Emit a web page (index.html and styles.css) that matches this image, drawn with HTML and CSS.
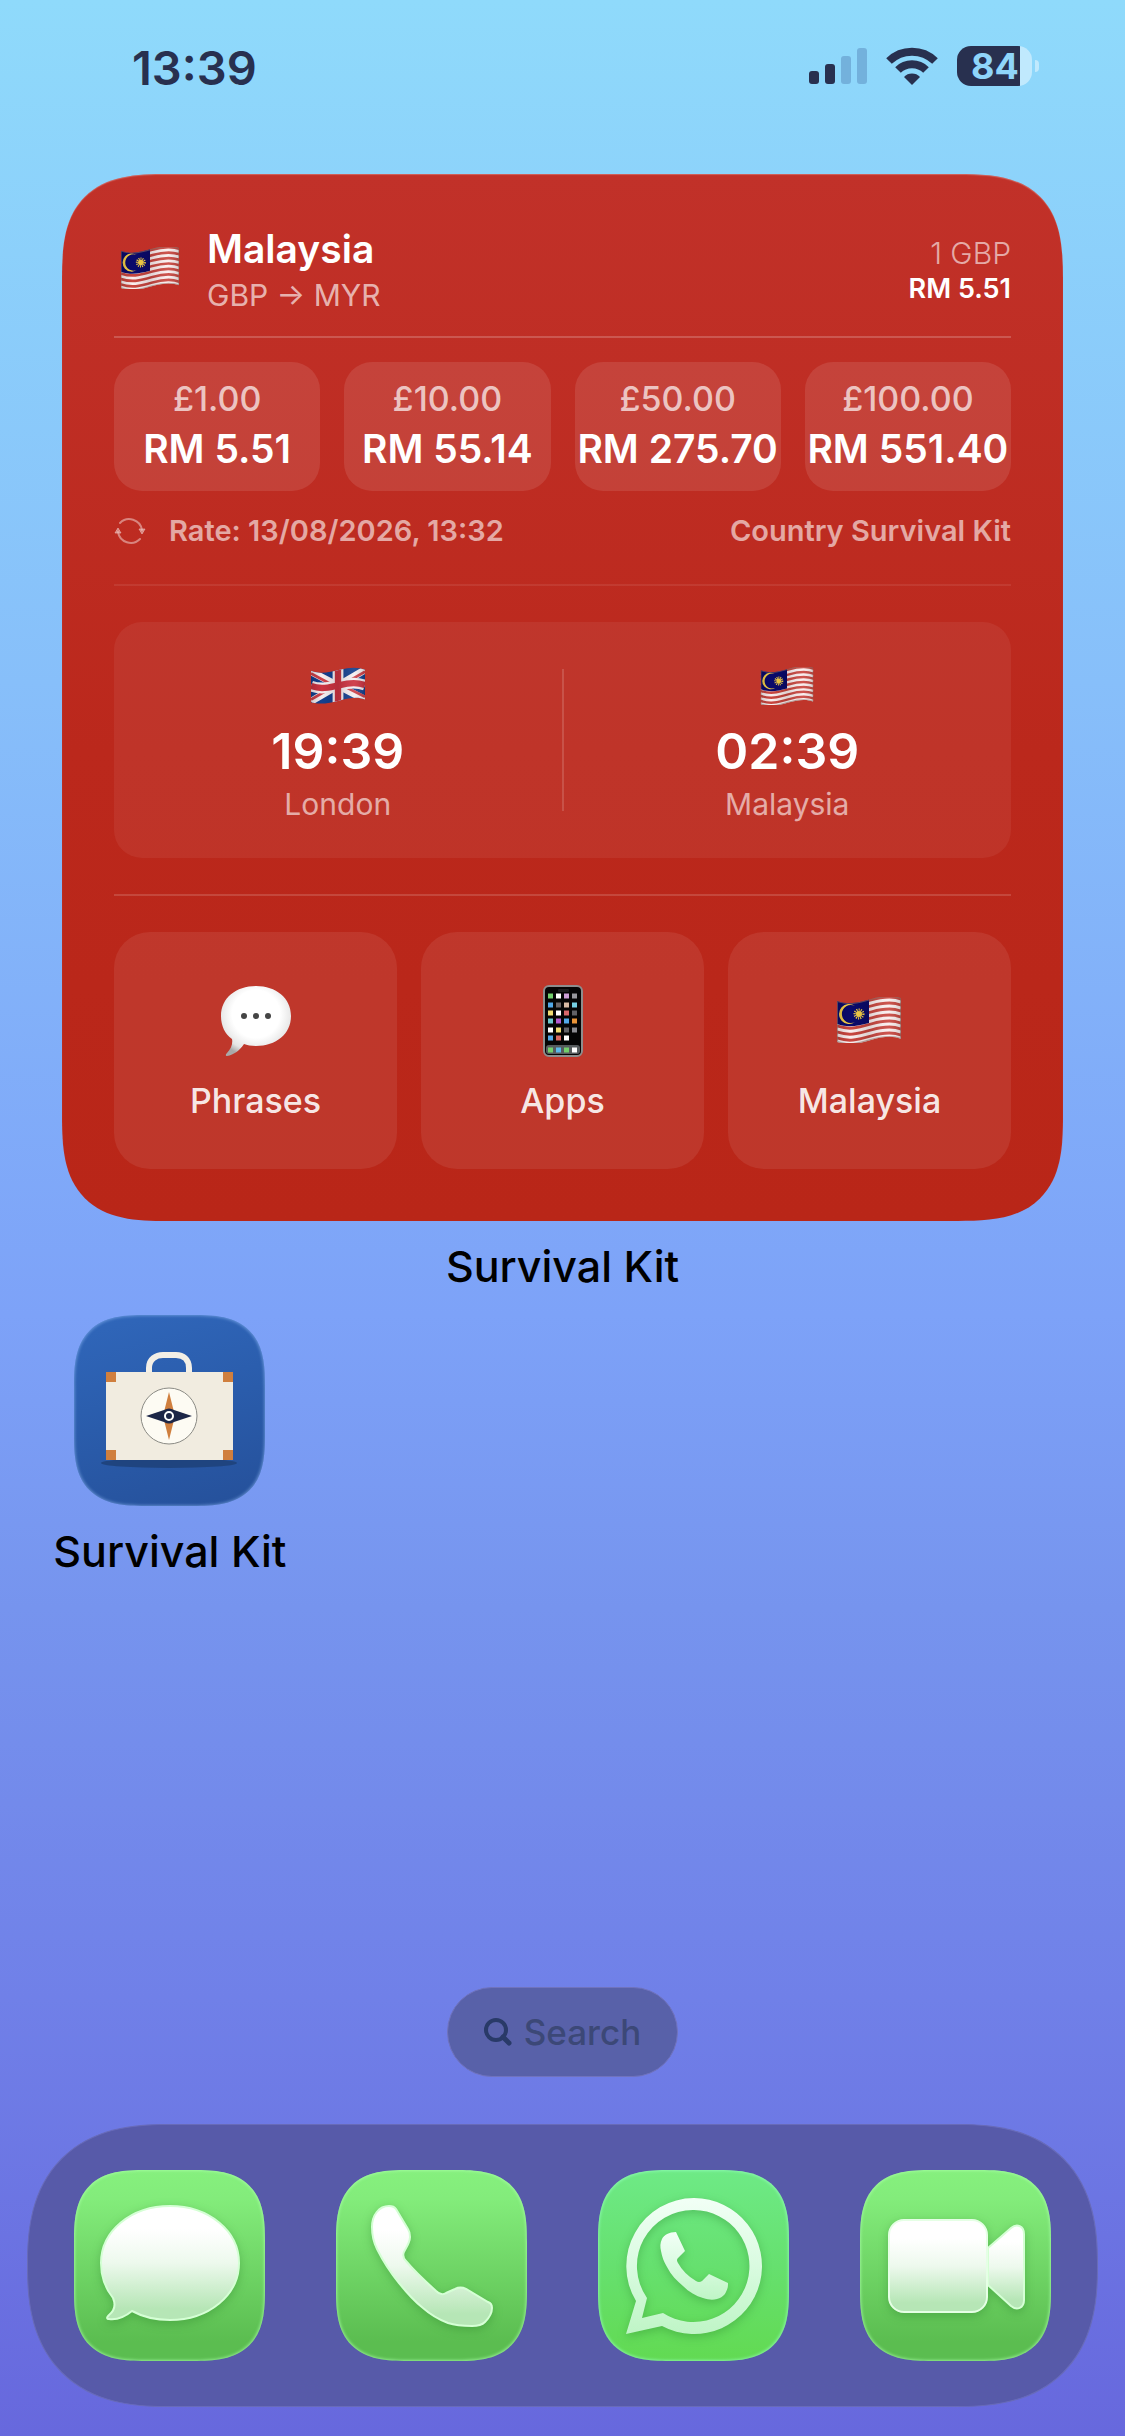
FILE: index.html
```
<!DOCTYPE html>
<html lang="en">
<head>
    <meta charset="utf-8">
    <meta name="viewport" content="width=device-width, initial-scale=1">
    <title>Survival Kit</title>
    <link rel="stylesheet" href="styles.css">
</head>
<body>
    <!-- shared flag drawings and gradients -->
    <svg class="defs" width="0" height="0" aria-hidden="true">
        <defs>
            <linearGradient id="glass" x1="0" y1="0" x2="0" y2="1">
                <stop offset="0.2" stop-color="#fff"/>
                <stop offset="0.5" stop-color="#edf9ed"/>
                <stop offset="0.9" stop-color="#b6e6b6"/>
            </linearGradient>
            <linearGradient id="glass2" x1="0" y1="0" x2="0" y2="1">
                <stop offset="0" stop-color="#f2fff6"/>
                <stop offset="0.5" stop-color="#d9fbe0"/>
                <stop offset="1" stop-color="#bff5c6"/>
            </linearGradient>
            <linearGradient id="fold" x1="0" y1="0" x2="1" y2="0">
                <stop offset="0" stop-color="#000" stop-opacity="0.15"/>
                <stop offset="0.2" stop-color="#000" stop-opacity="0"/>
                <stop offset="0.5" stop-color="#000" stop-opacity="0.12"/>
                <stop offset="0.8" stop-color="#fff" stop-opacity="0.08"/>
                <stop offset="1" stop-color="#000" stop-opacity="0.15"/>
            </linearGradient>
            <radialGradient id="puff" cx="0.5" cy="0.4" r="0.62">
                <stop offset="0.55" stop-color="#fff"/>
                <stop offset="0.85" stop-color="#e4e4e4"/>
                <stop offset="1" stop-color="#a9a9a9"/>
            </radialGradient>
            <path id="wave" d="M0 0c12 4 20 2 34-2s22-4 30-1"/>
            <clipPath id="my-shape"><path d="M0 4c12 4 20 2 34-2s22-4 30-1v41c-8-3-16-3-30 1s-22 6-34 2z"/></clipPath>
            <symbol id="flag-my" viewBox="0 0 64 46">
                <g clip-path="url(#my-shape)">
                    <rect width="64" height="46" fill="#c9463f"/>
                    <g fill="none" stroke="#fbeeee" stroke-width="3">
                        <use href="#wave" y="8"/>
                        <use href="#wave" y="14"/>
                        <use href="#wave" y="20"/>
                        <use href="#wave" y="26"/>
                        <use href="#wave" y="32"/>
                        <use href="#wave" y="38"/>
                        <use href="#wave" y="44"/>
                    </g>
                    <path d="M0 3c12 4 20 2 32-1v24c-12 3-20 5-32 1z" fill="#0a0a6b"/>
                    <path d="M18 9a9 9 0 1 0 0 16a10 10 0 1 1 0-16z" fill="#f5cf47"/>
                    <circle cx="22" cy="17" r="3" fill="#f5cf47"/>
                    <circle cx="22" cy="17" r="4" fill="none" stroke="#f5cf47" stroke-width="3" stroke-dasharray="1 1"/>
                    <rect width="64" height="46" fill="url(#fold)"/>
                    <path d="M0 4c12 4 20 2 34-2s22-4 30-1v41c-8-3-16-3-30 1s-22 6-34 2z" fill="none" stroke="#8b6a63" stroke-opacity="0.6" stroke-width="2"/>
                </g>
            </symbol>
            <clipPath id="uk-shape"><path d="M0 4c10 4 20 2 32-1s20-3 28 0v33c-8-3-16-2-28 1s-22 5-32 2z"/></clipPath>
            <symbol id="flag-uk" viewBox="0 0 60 42">
                <g clip-path="url(#uk-shape)">
                    <rect width="60" height="42" fill="#14408f"/>
                    <path d="M0 5l60 31M0 38L60 3" stroke="#f6eef0" stroke-width="8"/>
                    <path d="M0 7l26 14M60 33L34 20M0 36l26-15M60 5L34 20" stroke="#cc4049" stroke-width="3"/>
                    <path d="M30 0v42" stroke="#f6eef0" stroke-width="12"/>
                    <path d="M0 21c10 4 20 2 32-1s20-3 28 0" fill="none" stroke="#f6eef0" stroke-width="12"/>
                    <path d="M30 0v42" stroke="#cc3340" stroke-width="7"/>
                    <path d="M0 21c10 4 20 2 32-1s20-3 28 0" fill="none" stroke="#cc3340" stroke-width="7"/>
                    <rect width="60" height="42" fill="url(#fold)"/>
                </g>
            </symbol>
        </defs>
    </svg>

    <header class="status-bar">
        <time class="status-time">13:39</time>
        <div class="status-icons">
            <svg class="signal" viewBox="0 0 58 38" role="img" aria-label="Signal">
                <g fill="#28304f">
                    <rect x="0" y="24" width="10" height="13" rx="3"/>
                    <rect x="16" y="17" width="10" height="20" rx="3"/>
                </g>
                <g fill="#73b1dc">
                    <rect x="32" y="9" width="10" height="28" rx="3"/>
                    <rect x="48" y="1" width="10" height="36" rx="3"/>
                </g>
            </svg>
            <svg class="wifi" viewBox="0 0 52 38" role="img" aria-label="Wi-Fi">
                <g fill="none" stroke="#28304f" stroke-width="8">
                    <path d="M3 14a33 33 0 0 1 46 0"/>
                    <path d="M12 23a20 20 0 0 1 28 0"/>
                </g>
                <path d="M26 38l-8-8a11 11 0 0 1 16 0z" fill="#28304f"/>
            </svg>
            <span class="battery"><span class="battery-level">84</span></span>
        </div>
    </header>

    <main class="home">
        <section class="widget">
            <div class="widget-head">
                <svg class="head-flag" aria-hidden="true"><use href="#flag-my"/></svg>
                <div>
                    <h1 class="country">Malaysia</h1>
                    <p class="pair">GBP → MYR</p>
                </div>
                <div class="unit-rate">
                    <p class="unit">1 GBP</p>
                    <p class="unit-value">RM 5.51</p>
                </div>
            </div>

            <ul class="amounts">
                <li class="amount"><span class="from">£1.00</span><span class="to">RM 5.51</span></li>
                <li class="amount"><span class="from">£10.00</span><span class="to">RM 55.14</span></li>
                <li class="amount"><span class="from">£50.00</span><span class="to">RM 275.70</span></li>
                <li class="amount"><span class="from">£100.00</span><span class="to">RM 551.40</span></li>
            </ul>

            <div class="rate-row">
                <svg class="refresh" viewBox="0 0 32 28" aria-hidden="true">
                    <g fill="none" stroke="currentColor" stroke-width="2" stroke-linecap="round">
                        <path d="M6 6a13 13 0 0 1 22 7"/>
                        <path d="M26 22a13 13 0 0 1-22-7"/>
                    </g>
                    <path d="M25 12h6l-3 5zM1 16h6l-3-5z" fill="currentColor" stroke="currentColor" stroke-linejoin="round"/>
                </svg>
                <span>Rate: 13/08/2026, 13:32</span>
                <span class="kit-name">Country Survival Kit</span>
            </div>

            <div class="clocks">
                <div class="clock">
                    <svg class="clock-flag" aria-hidden="true"><use href="#flag-uk"/></svg>
                    <time class="clock-time">19:39</time>
                    <span class="clock-place">London</span>
                </div>
                <span class="clock-line"></span>
                <div class="clock">
                    <svg class="clock-flag" aria-hidden="true"><use href="#flag-my"/></svg>
                    <time class="clock-time">02:39</time>
                    <span class="clock-place">Malaysia</span>
                </div>
            </div>

            <nav class="tiles">
                <a class="tile" href="#phrases">
                    <svg class="tile-icon" viewBox="0 0 72 72" aria-hidden="true">
                        <path d="M36 1C56 1 71 13 71 31S56 61 36 61c-5 0-9-1-12-2-4 6-10 11-17 12-2 0-1-2 0-3 4-4 6-9 5-14C5 49 1 41 1 31 1 13 16 1 36 1z" fill="url(#puff)"/>
                        <g fill="#454545"><circle cx="24" cy="31" r="3"/><circle cx="36" cy="31" r="3"/><circle cx="48" cy="31" r="3"/></g>
                    </svg>
                    <span>Phrases</span>
                </a>
                <a class="tile" href="#apps">
                    <svg class="tile-icon" viewBox="0 0 72 72" aria-hidden="true">
                        <rect x="17" y="1" width="38" height="70" rx="5" fill="#050505" stroke="#8d8d8d" stroke-width="2"/>
                        <rect x="31" y="4" width="11" height="3" rx="1" fill="#1d1d1f"/>
                        <rect x="19" y="60" width="34" height="9" rx="3" fill="#565b5d"/>
                        <!-- app icons on the phone, row by row -->
                        <g stroke-width="5">
                            <path d="M21 11h5" stroke="#72cf6b"/><path d="M29 11h5" stroke="#fff"/><path d="M37 11h5" stroke="#cf9fd8"/><path d="M45 11h5" stroke="#98989d"/>
                            <path d="M21 20h5" stroke="#52a8e8"/><path d="M29 20h5" stroke="#6b6567"/><path d="M37 20h5" stroke="#d9bba5"/><path d="M45 20h5" stroke="#74cfe2"/>
                            <path d="M21 28h5" stroke="#f0dc72"/><path d="M29 28h5" stroke="#fff"/><path d="M37 28h5" stroke="#d9676b"/><path d="M45 28h5" stroke="#626266"/>
                            <path d="M21 36h5" stroke="#6cc9ce"/><path d="M29 36h5" stroke="#b45bd0"/><path d="M37 36h5" stroke="#52a8e8"/><path d="M45 36h5" stroke="#ea9438"/>
                            <path d="M21 45h5" stroke="#fff"/><path d="M29 45h5" stroke="#f0dc72"/><path d="M37 45h5" stroke="#626266"/><path d="M45 45h5" stroke="#8b8b90"/>
                            <path d="M21 53h5" stroke="#52a8e8"/><path d="M29 53h5" stroke="#d9675f"/><path d="M37 53h5" stroke="#fff"/>
                            <path d="M21 65h5" stroke="#72cf6b"/><path d="M29 65h5" stroke="#5ab8ea"/><path d="M37 65h5" stroke="#72cf6b"/><path d="M45 65h5" stroke="#fff"/>
                        </g>
                    </svg>
                    <span>Apps</span>
                </a>
                <a class="tile" href="#malaysia">
                    <svg class="tile-icon" viewBox="0 0 72 72" aria-hidden="true"><use href="#flag-my" x="3" y="12" width="64" height="46"/></svg>
                    <span>Malaysia</span>
                </a>
            </nav>
        </section>
        <p class="widget-label">Survival Kit</p>

        <div class="apps">
            <a class="app" href="#survival-kit">
                <span class="icon icon-kit">
                    <svg viewBox="0 0 190 190" aria-hidden="true">
                        <ellipse cx="95" cy="148" rx="68" ry="5" fill="#1f447f"/>
                        <path d="M75 60V53C75 44 82 40 89 40H102C109 40 115 44 115 53V60" fill="none" stroke="#f3efe6" stroke-width="6"/>
                        <rect x="32" y="57" width="127" height="88" fill="#f1ece0"/>
                        <path d="M32 57h10v10H32zM149 57h10v10h-10zM32 135h10v10H32zM149 135h10v10h-10z" fill="#d07f3e"/>
                        <circle cx="95" cy="101" r="28" fill="#fdfbf3" stroke="#8b8b85"/>
                        <path d="M95 77l6 24-6 24-6-24z" fill="#d07f3e"/>
                        <path d="M72 101L90 95Q95 92 100 95L118 101L100 107Q95 110 90 107z" fill="#1c2647"/>
                        <circle cx="95" cy="101" r="4" fill="none" stroke="#fff" stroke-width="2"/>
                    </svg>
                </span>
                <span class="app-name">Survival Kit</span>
            </a>
        </div>
    </main>

    <button class="search" type="button">
        <svg viewBox="0 0 28 28" aria-hidden="true">
            <circle cx="12" cy="12" r="10" fill="none" stroke="#293a68" stroke-width="4"/>
            <path d="M19 19l6 6" stroke="#293a68" stroke-width="5" stroke-linecap="round"/>
        </svg>
        Search
    </button>

    <nav class="dock">
        <a class="icon icon-green" href="#messages" aria-label="Messages">
            <svg viewBox="0 0 190 190" aria-hidden="true">
                <path d="M96 36C135 36 165 61 165 93S135 150 96 150C82 150 69 147 58 141C52 146 43 150 35 149C32 149 33 147 35 145C40 141 42 135 39 128C31 118 27 107 27 93C27 61 57 36 96 36Z" fill="url(#glass)" stroke="#d5ffd5" stroke-width="2"/>
            </svg>
        </a>
        <a class="icon icon-green" href="#phone" aria-label="Phone">
            <svg viewBox="0 0 190 190" aria-hidden="true">
                <path d="M53 36C43 36 36 45 36 57C36 66 38 73 41 79C47 91 54 102 63 113C71 123 78 131 87 138C96 146 104 150 112 153C121 156 128 156 136 156C142 156 146 155 149 152C153 148 156 143 156 138C156 135 155 133 152 132L130 119C126 117 123 117 119 119L110 123C107 125 103 124 100 121C89 111 79 102 70 91C66 87 67 83 69 80C72 75 74 71 74 67C74 64 74 62 72 59L60 39C58 36 56 36 53 36Z" fill="url(#glass)" stroke="#d5ffd5" stroke-width="2"/>
            </svg>
        </a>
        <a class="icon icon-whatsapp" href="#whatsapp" aria-label="WhatsApp">
            <svg viewBox="0 0 190 190" aria-hidden="true">
                <path fill-rule="evenodd" d="M96 28A68 68 0 1 1 64 156L28 164L38 131A68 68 0 0 1 96 28ZM96 40A56 56 0 0 0 49 128L44 148L65 143A56 56 0 1 0 96 40Z" fill="url(#glass2)"/>
                <path d="M78 62C71 62 66 65 64 69C62 73 62 77 63 81C64 87 66 92 69 97C73 105 79 111 85 116C91 122 98 126 105 128C111 130 115 130 119 129C123 128 127 125 128 122C130 118 130 116 130 113L111 104L104 111Q101 113 98 111Q86 104 80 93Q78 90 80 88L87 81Z" fill="url(#glass2)"/>
            </svg>
        </a>
        <a class="icon icon-green" href="#facetime" aria-label="FaceTime">
            <svg viewBox="0 0 190 190" aria-hidden="true">
                <path d="M128 78L151 58C157 53 164 56 164 64V130C164 138 157 141 151 136L128 115Z" fill="url(#glass)" stroke="#d5ffd5" stroke-width="2"/>
                <rect x="29" y="50" width="98" height="92" rx="15" fill="url(#glass)" stroke="#e5ffe5" stroke-width="2"/>
            </svg>
        </a>
    </nav>
</body>
</html>
```
FILE: styles.css
```
* {
    box-sizing: border-box;
    margin: 0;
    padding: 0;
}
body {
    min-height: 100vh;
    display: flex;
    flex-direction: column;
    padding-bottom: 29px;
    background: linear-gradient(#8fdafb, #87bffa 28%, #7da2f8 54%, #7694ee 66%, #7080e8 82%, #6768dd);
    font-family: Inter, "Liberation Sans", sans-serif;
    color: #fff;
}
a {
    color: inherit;
    text-decoration: none;
}
ul {
    list-style: none;
}
.defs {
    position: absolute;
}

/* status bar */
.status-bar {
    display: flex;
    justify-content: space-between;
    padding: 38px 93px 76px 132px;
    color: #28304f;
}
.status-time {
    font-size: 47px;
    line-height: 60px;
    font-weight: 600;
}
.status-icons {
    display: flex;
    align-items: center;
    gap: 19px;
    height: 56px;
}
.signal {
    width: 58px;
    height: 38px;
}
.wifi {
    width: 52px;
    height: 38px;
}
.battery {
    position: relative;
    width: 75px;
    height: 40px;
    border-radius: 14px;
    background: linear-gradient(90deg, #28304f 63px, #c0e9fd 63px);
    color: #8fd5fa;
}
/* battery tip */
.battery::after {
    content: "";
    position: absolute;
    right: -7px;
    top: 14px;
    width: 4px;
    height: 12px;
    border-radius: 0 6px 6px 0;
    background: #c0e9fd;
}
.battery-level {
    display: block;
    padding-left: 14px;
    font-size: 36px;
    line-height: 40px;
    font-weight: 700;
}

/* widget */
.home {
    padding: 0 39px;
}
.widget {
    margin: 0 23px;
    padding: 51px 52px 52px;
    border-radius: 84px;
    background: linear-gradient(#c13129, #bb281c 55%, #b92618);
    box-shadow: inset 0 1px 1px rgba(255, 255, 255, 0.25);
}
.widget-head {
    display: flex;
    align-items: center;
    padding-bottom: 19px;
    border-bottom: 2px solid rgba(255, 255, 255, 0.2);
}
.head-flag {
    width: 60px;
    height: 42px;
    margin: 0 27px 6px 6px;
}
.country {
    font-size: 39px;
    line-height: 48px;
    font-weight: 600;
}
.pair {
    font-size: 30px;
    line-height: 44px;
    color: rgba(255, 255, 255, 0.65);
}
.unit-rate {
    margin-left: auto;
    text-align: right;
    line-height: 35px;
}
.unit {
    font-size: 30px;
    font-weight: 300;
    color: rgba(255, 255, 255, 0.6);
}
.unit-value {
    font-size: 27px;
    font-weight: 600;
}
.amounts {
    display: grid;
    grid-template-columns: repeat(4, 1fr);
    gap: 24px;
    margin-top: 24px;
}
.amount {
    display: flex;
    flex-direction: column;
    align-items: center;
    min-width: 0;
    padding: 12px 0 17px;
    border-radius: 28px;
    background: rgba(255, 255, 255, 0.1);
    line-height: 50px;
    white-space: nowrap;
}
.from {
    font-size: 34px;
    font-weight: 500;
    color: rgba(255, 255, 255, 0.7);
}
.to {
    font-size: 39px;
    font-weight: 600;
}
.rate-row {
    display: flex;
    align-items: center;
    padding: 20px 0 33px;
    border-bottom: 2px solid rgba(255, 255, 255, 0.08);
    font-size: 29px;
    line-height: 40px;
    font-weight: 600;
    color: rgba(255, 255, 255, 0.6);
}
.refresh {
    width: 32px;
    height: 28px;
    margin-right: 23px;
    opacity: 0.7;
}
.kit-name {
    margin-left: auto;
}
.clocks {
    display: flex;
    align-items: center;
    margin: 36px 0;
    border-radius: 28px;
    background: rgba(255, 255, 255, 0.06);
}
.clock {
    flex: 1;
    display: flex;
    flex-direction: column;
    align-items: center;
    padding: 45px 0 31px;
}
.clock-line {
    width: 2px;
    height: 142px;
    background: rgba(255, 255, 255, 0.15);
}
.clock-flag {
    width: 54px;
    height: 38px;
    margin-bottom: 16px;
}
.clock-time {
    font-size: 50px;
    line-height: 60px;
    font-weight: 600;
}
.clock-place {
    font-size: 30px;
    line-height: 46px;
    color: rgba(255, 255, 255, 0.6);
}
.tiles {
    display: grid;
    grid-template-columns: repeat(3, 1fr);
    gap: 24px;
    padding-top: 36px;
    border-top: 2px solid rgba(255, 255, 255, 0.15);
}
.tile {
    display: flex;
    flex-direction: column;
    align-items: center;
    gap: 20px;
    padding: 53px 0 44px;
    border-radius: 36px;
    background: rgba(255, 255, 255, 0.08);
    font-size: 34px;
    line-height: 48px;
    font-weight: 500;
    color: rgba(255, 255, 255, 0.9);
}
.tile-icon {
    width: 72px;
    height: 72px;
}
.widget-label,
.app-name {
    padding-top: 15px;
    font-size: 43px;
    line-height: 60px;
    font-weight: 500;
    text-align: center;
    color: #000;
}

/* home screen apps */
.apps {
    display: grid;
    grid-template-columns: repeat(4, 1fr);
    margin-top: 19px;
}
.app {
    display: flex;
    flex-direction: column;
    align-items: center;
    white-space: nowrap;
}
.icon {
    display: block;
    width: 191px;
    height: 191px;
    border-radius: 52px;
}
.icon svg {
    display: block;
    width: 190px;
    height: 190px;
}
.icon-kit {
    background: linear-gradient(165deg, #3067bb, #2a5cab 50%, #25509a);
    box-shadow: inset 0 0 3px 1px rgba(160, 200, 255, 0.45);
}
.icon-green {
    background: linear-gradient(#86f07e, #83ec7b 15%, #5bbd50 90%);
    box-shadow: inset 0 0 3px 1px rgba(170, 255, 170, 0.7);
}
.icon-whatsapp {
    background: linear-gradient(#6eea86, #66e06f 50%, #62da52);
    box-shadow: inset 0 0 3px 1px rgba(150, 255, 190, 0.7);
}
.icon-green svg,
.icon-whatsapp svg {
    filter: drop-shadow(0 3px 5px rgba(30, 110, 30, 0.3));
}

/* search and dock */
.search {
    display: flex;
    align-items: center;
    gap: 12px;
    align-self: center;
    height: 90px;
    margin-top: auto;
    padding: 0 36px;
    border: 1px solid #7073bd;
    border-radius: 45px;
    background: #5861a9;
    font: 500 35px/44px Inter, "Liberation Sans", sans-serif;
    color: #3c4877;
}
.search svg {
    width: 28px;
    height: 28px;
}
.dock {
    display: flex;
    justify-content: space-between;
    margin: 47px 27px 0;
    padding: 45px 46px;
    border: 1px solid #686bb8;
    border-radius: 115px;
    background: #575aa9;
}

/* smoother corners where the browser has them */
@supports (corner-shape: superellipse(1.5)) {
    .widget {
        border-radius: 105px;
        corner-shape: superellipse(1.5);
    }
    .icon {
        border-radius: 72px;
        corner-shape: superellipse(1.5);
    }
    .dock {
        border-radius: 140px;
        corner-shape: superellipse(1.3);
    }
}
```
